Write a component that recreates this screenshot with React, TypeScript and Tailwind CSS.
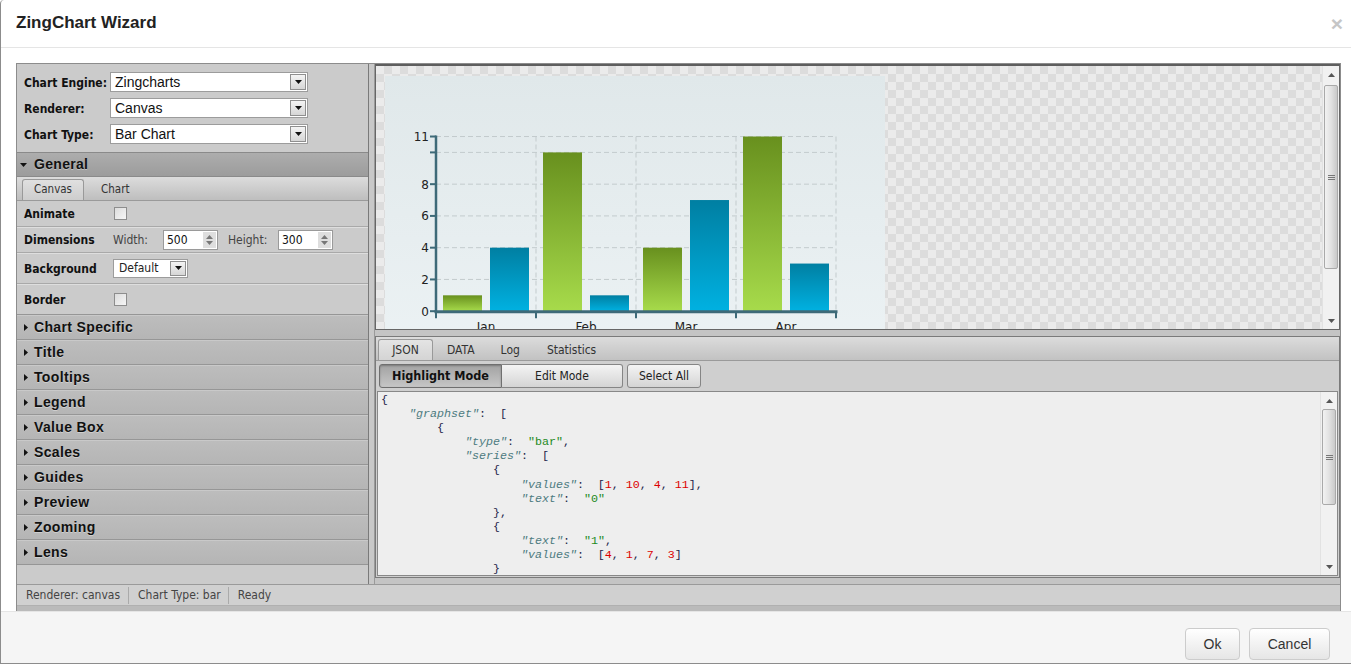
import React from "react";

const TAH = "font-['DejaVu_Sans_Condensed','DejaVu_Sans',sans-serif]";

function DownTri({ c = "#111" }: { c?: string }) {
  return (
    <svg width="7" height="4" viewBox="0 0 7 4" className="block">
      <path d="M0 0H7L3.5 4Z" fill={c} />
    </svg>
  );
}

function RightTri() {
  return (
    <svg width="4" height="7" viewBox="0 0 4 7" className="block">
      <path d="M0 0L4 3.5L0 7Z" fill="#111" />
    </svg>
  );
}

function SelectBox({ value, w }: { value: string; w: string }) {
  return (
    <div className={"h-[20px] bg-white border border-[#9c9c9c] flex items-center " + w}>
      <span className="pl-[4px] text-[14px] text-[#111] font-['Liberation_Sans',Arial,sans-serif] leading-none">{value}</span>
      <div className="ml-auto mr-[1px] w-[16px] h-[16px] border border-[#8f8f8f] bg-gradient-to-b from-[#f4f4f4] to-[#d6d6d6] flex items-center justify-center">
        <DownTri />
      </div>
    </div>
  );
}

function Checkbox() {
  return <div className="w-[13px] h-[13px] border border-[#8d8d8d] bg-gradient-to-br from-[#dcdcdc] to-[#f6f6f6]" />;
}

function Spinner({ value }: { value: string }) {
  return (
    <div className="w-[55px] h-[20px] bg-white border border-[#9a9a9a] flex items-center">
      <span className="pl-[3px] text-[12px] text-[#111]">{value}</span>
      <div className="ml-auto mr-[1px] w-[13px] h-[16px] bg-[#dedede] flex flex-col items-center justify-center gap-[2px]">
        <svg width="7" height="4" viewBox="0 0 7 4" className="block"><path d="M0 4H7L3.5 0Z" fill="#777" /></svg>
        <svg width="7" height="4" viewBox="0 0 7 4" className="block"><path d="M0 0H7L3.5 4Z" fill="#777" /></svg>
      </div>
    </div>
  );
}

function Scrollbar({ thumbTop, thumbH }: { thumbTop: number; thumbH: number }) {
  return (
    <div className="w-[17px] shrink-0 h-full bg-[#f1f1f1] border-l border-[#e2e2e2] flex flex-col items-center relative">
      <div className="h-[17px] w-full flex items-center justify-center">
        <svg width="7" height="4" viewBox="0 0 7 4" className="block"><path d="M0 4H7L3.5 0Z" fill="#555" /></svg>
      </div>
      <div
        className="absolute left-[1px] w-[14px] rounded-[2px] border border-[#a9a9a9] bg-gradient-to-r from-[#f2f2f2] via-[#e2e2e2] to-[#c9c9c9] flex flex-col items-center justify-center gap-[1px]"
        style={{ top: thumbTop, height: thumbH }}
      >
        <div className="w-[7px] h-[1px] bg-[#777]" />
        <div className="w-[7px] h-[1px] bg-[#777]" />
        <div className="w-[7px] h-[1px] bg-[#777]" />
      </div>
      <div className="mt-auto h-[17px] w-full flex items-center justify-center">
        <svg width="7" height="4" viewBox="0 0 7 4" className="block"><path d="M0 0H7L3.5 4Z" fill="#555" /></svg>
      </div>
    </div>
  );
}

function Chart() {
  const y = (v: number) => 235.2 - v * 15.88;
  const green = [1, 10, 4, 11];
  const blue = [4, 1, 7, 3];
  const months = ["Jan", "Feb", "Mar", "Apr"];
  return (
    <svg width="500" height="300" viewBox="0 0 500 300" className="block shrink-0">
      <defs>
        <linearGradient id="cbg" x1="0" y1="0" x2="0" y2="1">
          <stop offset="0" stopColor="#e0e8ea" />
          <stop offset="1" stopColor="#edf3f5" />
        </linearGradient>
        <linearGradient id="cg" x1="0" y1="0" x2="0" y2="1">
          <stop offset="0" stopColor="#68901e" />
          <stop offset="1" stopColor="#a7db4b" />
        </linearGradient>
        <linearGradient id="cb" x1="0" y1="0" x2="0" y2="1">
          <stop offset="0" stopColor="#007fa2" />
          <stop offset="1" stopColor="#00b1e1" />
        </linearGradient>
      </defs>
      <rect width="500" height="300" fill="url(#cbg)" />
      {[11, 10, 8, 6, 4, 2].map((v) => (
        <line key={"h" + v} x1="51" x2="451" y1={y(v)} y2={y(v)} stroke="#c3cbcd" strokeWidth="1" strokeDasharray="5 3" />
      ))}
      {[151, 251, 351, 451].map((x) => (
        <line key={"v" + x} x1={x} x2={x} y1={y(11)} y2={y(0)} stroke="#c3cbcd" strokeWidth="1" strokeDasharray="5 3" />
      ))}
      {green.map((v, i) => (
        <rect key={"g" + i} x={58 + i * 100} y={y(v)} width="39" height={y(0) - y(v)} fill="url(#cg)" />
      ))}
      {blue.map((v, i) => (
        <rect key={"b" + i} x={105 + i * 100} y={y(v)} width="39" height={y(0) - y(v)} fill="url(#cb)" />
      ))}
      {[11, 10, 8, 6, 4, 2, 0].map((v) => (
        <line key={"t" + v} x1="45" x2="51" y1={y(v)} y2={y(v)} stroke="#3e6a78" strokeWidth="2" />
      ))}
      <line x1="51" x2="51" y1={y(11) - 1} y2={y(0) + 1} stroke="#3e6a78" strokeWidth="2.5" />
      <line x1="49.5" x2="452.5" y1={y(0) + 0.5} y2={y(0) + 0.5} stroke="#3e6a78" strokeWidth="3" />
      {[51, 151, 251, 351, 451].map((x) => (
        <line key={"xt" + x} x1={x} x2={x} y1={y(0)} y2={y(0) + 7} stroke="#3e6a78" strokeWidth="2" />
      ))}
      {[11, 8, 6, 4, 2, 0].map((v) => (
        <text key={"l" + v} x="44" y={y(v) + 4.5} textAnchor="end" fontSize="12" fill="#222" fontFamily="DejaVu Sans, sans-serif">
          {v}
        </text>
      ))}
      {months.map((m, i) => (
        <text key={m} x={101 + i * 100} y="255" textAnchor="middle" fontSize="12" fill="#222" fontFamily="DejaVu Sans, sans-serif">
          {m}
        </text>
      ))}
    </svg>
  );
}

const P = ({ children }: { children: React.ReactNode }) => <span className="text-[#25254a]">{children}</span>;
const K = ({ children }: { children: React.ReactNode }) => <span className="text-[#4d7b80] italic">{children}</span>;
const S = ({ children }: { children: React.ReactNode }) => <span className="text-[#1d8a1d]">{children}</span>;
const N = ({ children }: { children: React.ReactNode }) => <span className="text-[#dd0000]">{children}</span>;

function Code() {
  const ind = (n: number) => "    ".repeat(n);
  const lines: React.ReactNode[] = [
    <><P>{"{"}</P></>,
    <>{ind(1)}<K>"graphset"</K><P>:  [</P></>,
    <>{ind(2)}<P>{"{"}</P></>,
    <>{ind(3)}<K>"type"</K><P>:  </P><S>"bar"</S><P>,</P></>,
    <>{ind(3)}<K>"series"</K><P>:  [</P></>,
    <>{ind(4)}<P>{"{"}</P></>,
    <>{ind(5)}<K>"values"</K><P>:  [</P><N>1</N><P>, </P><N>10</N><P>, </P><N>4</N><P>, </P><N>11</N><P>],</P></>,
    <>{ind(5)}<K>"text"</K><P>:  </P><S>"0"</S></>,
    <>{ind(4)}<P>{"},"}</P></>,
    <>{ind(4)}<P>{"{"}</P></>,
    <>{ind(5)}<K>"text"</K><P>:  </P><S>"1"</S><P>,</P></>,
    <>{ind(5)}<K>"values"</K><P>:  [</P><N>4</N><P>, </P><N>1</N><P>, </P><N>7</N><P>, </P><N>3</N><P>]</P></>,
    <>{ind(4)}<P>{"}"}</P></>,
    <>{ind(3)}<P>{"]"}</P></>,
    <>{ind(2)}<P>{"}"}</P></>,
    <>{ind(1)}<P>{"]"}</P></>,
    <><P>{"}"}</P></>,
  ];
  return (
    <div className="flex-1 overflow-hidden pl-[3px] pt-[1px] font-['Liberation_Mono','Courier_New',monospace] text-[11.67px] leading-[14.1px] whitespace-pre">
      {lines.map((l, i) => (
        <div key={i}>{l}</div>
      ))}
    </div>
  );
}

const sections = ["Chart Specific", "Title", "Tooltips", "Legend", "Value Box", "Scales", "Guides", "Preview", "Zooming", "Lens"];

function LeftPanel() {
  return (
    <div className={"w-[352px] shrink-0 h-full bg-[#cbcbcb] border-r border-[#7a7a7a] flex flex-col overflow-hidden " + TAH}>
      <div className="flex flex-col gap-[6px] pl-[7px] pt-[8px] pb-[8px]">
        {[
          ["Chart Engine:", "Zingcharts"],
          ["Renderer:", "Canvas"],
          ["Chart Type:", "Bar Chart"],
        ].map(([l, v]) => (
          <div key={l} className="flex items-center h-[20px]">
            <span className="w-[86px] pt-[2px] text-[12px] font-bold text-[#111]">{l}</span>
            <SelectBox value={v} w="w-[198px]" />
          </div>
        ))}
      </div>
      <div className="h-[25px] shrink-0 border-y border-[#8a8a8a] bg-gradient-to-b from-[#adadad] to-[#9c9c9c] flex items-center pl-[3px]">
        <DownTri />
        <span className="ml-[7px] text-[14px] font-bold text-[#111] font-['Liberation_Sans',Arial,sans-serif] tracking-[0.3px] [text-shadow:0_1px_0_rgba(255,255,255,0.35)]">General</span>
      </div>
      <div className="h-[24px] shrink-0 bg-gradient-to-b from-[#dcdcdc] to-[#bebebe] border-b border-[#9a9a9a] flex items-end pl-[5px]">
        <div className="w-[62px] h-[21px] border border-b-0 border-[#999] rounded-t-[3px] bg-gradient-to-b from-[#e0e0e0] to-[#cdcdcd] flex items-center justify-center text-[11.5px] text-[#333]">
          Canvas
        </div>
        <div className="h-[21px] flex items-center ml-[17px] text-[11.5px] text-[#333]">Chart</div>
      </div>
      <div className="h-[26px] shrink-0 flex items-center pl-[7px] border-b border-[#a9a9a9] shadow-[0_1px_0_#dedede]">
        <span className="w-[90px] pt-[1px] text-[12px] font-bold text-[#111]">Animate</span>
        <Checkbox />
      </div>
      <div className="h-[26px] shrink-0 flex items-center pl-[7px] border-b border-[#a9a9a9] shadow-[0_1px_0_#dedede]">
        <span className="w-[89px] pt-[1px] text-[12px] font-bold text-[#111]">Dimensions</span>
        <span className="w-[50px] pt-[1px] text-[12px] text-[#444]">Width:</span>
        <Spinner value="500" />
        <span className="ml-[10px] w-[50px] pt-[1px] text-[12px] text-[#444]">Height:</span>
        <Spinner value="300" />
      </div>
      <div className="h-[31px] shrink-0 flex items-center pl-[7px] border-b border-[#a9a9a9] shadow-[0_1px_0_#dedede]">
        <span className="w-[89px] pt-[2px] text-[12px] font-bold text-[#111]">Background</span>
        <div className="w-[75px] h-[19px] bg-white border border-[#9c9c9c] flex items-center">
          <span className="pl-[5px] text-[12px] text-[#222]">Default</span>
          <div className="ml-auto mr-[1px] w-[16px] h-[15px] border border-[#8f8f8f] bg-gradient-to-b from-[#f4f4f4] to-[#d6d6d6] flex items-center justify-center">
            <DownTri />
          </div>
        </div>
      </div>
      <div className="h-[30px] shrink-0 flex items-center pl-[7px]">
        <span className="w-[90px] pt-[1px] text-[12px] font-bold text-[#111]">Border</span>
        <Checkbox />
      </div>
      {sections.map((s) => (
        <div
          key={s}
          className="h-[25px] shrink-0 border-t border-[#969696] bg-gradient-to-b from-[#bdbdbd] to-[#b5b5b5] shadow-[inset_0_1px_0_#c9c9c9] flex items-center pl-[7px]"
        >
          <RightTri />
          <span className="ml-[6px] text-[14px] font-bold text-[#111] font-['Liberation_Sans',Arial,sans-serif] tracking-[0.35px] [text-shadow:0_1px_0_rgba(255,255,255,0.35)]">
            {s}
          </span>
        </div>
      ))}
      <div className="border-t border-[#969696] flex-1" />
    </div>
  );
}

function RightPanel() {
  return (
    <div className={"flex-1 h-full flex flex-col bg-[#c4c4c4] " + TAH}>
      <div className="h-[266px] shrink-0 border border-[#666] border-t-2 border-t-[#5e5e5e] flex overflow-hidden">
        <div className="flex-1 overflow-hidden pl-[9px] pt-[10px] bg-[#ebebeb] bg-[image:conic-gradient(#dcdcdc_25%,#ebebeb_0_50%,#dcdcdc_0_75%,#ebebeb_0)] bg-[length:16px_16px]">
          <Chart />
        </div>
        <Scrollbar thumbTop={19} thumbH={184} />
      </div>
      <div className="h-[6px] shrink-0" />
      <div className="h-[242px] shrink-0 border border-[#7a7a7a] flex flex-col bg-[#cfcfcf]">
        <div className="h-[24px] shrink-0 bg-gradient-to-b from-[#dcdcdc] to-[#c2c2c2] border-b border-[#9a9a9a] flex items-end pl-[2px] text-[12px] text-[#333]">
          <div className="w-[55px] h-[21px] border border-b-0 border-[#999] rounded-t-[3px] bg-gradient-to-b from-[#e4e4e4] to-[#d4d4d4] flex items-center justify-center">JSON</div>
          <div className="h-[21px] flex items-center ml-[14px]">DATA</div>
          <div className="h-[21px] flex items-center ml-[26px]">Log</div>
          <div className="h-[21px] flex items-center ml-[27px]">Statistics</div>
        </div>
        <div className="h-[30px] shrink-0 flex items-center pl-[3px]">
          <div className="w-[123px] h-[24px] rounded-l-[3px] border border-[#6f6f6f] bg-gradient-to-b from-[#a3a3a3] to-[#c6c6c6] shadow-[inset_0_1px_2px_rgba(0,0,0,0.25)] flex items-center justify-center text-[12.5px] font-bold text-[#111]">
            Highlight Mode
          </div>
          <div className="w-[121px] h-[24px] rounded-r-[3px] border border-l-0 border-[#858585] bg-gradient-to-b from-[#f4f4f4] to-[#d4d4d4] flex items-center justify-center text-[12px] text-[#222]">
            Edit Mode
          </div>
          <div className="ml-[4px] w-[74px] h-[24px] rounded-[3px] border border-[#858585] bg-gradient-to-b from-[#f4f4f4] to-[#d4d4d4] flex items-center justify-center text-[12px] text-[#222]">
            Select All
          </div>
        </div>
        <div className="flex-1 mx-[1px] mb-[1px] border border-[#888] bg-[#eeeeee] flex overflow-hidden">
          <Code />
          <Scrollbar thumbTop={17} thumbH={96} />
        </div>
      </div>
      <div className="flex-1" />
    </div>
  );
}

export default function App() {
  return (
    <div className="w-[1351px] h-[664px] bg-white border-l border-b border-[#8c8c8c] rounded-tl-[4px] flex flex-col overflow-hidden font-['Liberation_Sans',Arial,sans-serif]">
      <div className="h-[48px] shrink-0 border-b border-[#e5e5e5] flex items-center justify-between pl-[15px] pr-[8px]">
        <h4 className="text-[17px] font-bold text-[#222] leading-none -mt-[2px]">ZingChart Wizard</h4>
        <span className="text-[21px] font-bold text-[#c6c6c6] leading-none">×</span>
      </div>
      <div className="flex-1 pl-[15px] pt-[15px]">
        <div className="w-[1325px] h-[548px] border-x border-t border-[#8c8c8c] bg-[#c4c4c4] flex flex-col">
          <div className="h-[520px] shrink-0 flex">
            <LeftPanel />
            <div className="w-[6px] shrink-0 bg-[#c8c8c8] border-r border-[#9a9a9a]" />
            <RightPanel />
          </div>
          <div className={"h-[21px] shrink-0 border-t border-[#9a9a9a] bg-[#d0d0d0] flex items-center text-[12px] text-[#444] " + TAH}>
            <span className="pl-[9px] pr-[8px]">Renderer: canvas</span>
            <span className="w-px h-[17px] bg-[#aaa]" />
            <span className="pl-[9px] pr-[7px]">Chart Type: bar</span>
            <span className="w-px h-[17px] bg-[#aaa]" />
            <span className="pl-[9px]">Ready</span>
          </div>
          <div className="flex-1 bg-[#bababa] border-t border-[#b0b0b0]" />
        </div>
      </div>
      <div className="h-[52px] shrink-0 bg-[#f5f5f5] border-t border-[#e5e5e5] flex justify-end items-start pt-[16px] pr-[21px] gap-[9px]">
        <button className="w-[55px] h-[32px] rounded-[4px] border border-[#cccccc] bg-gradient-to-b from-white to-[#e6e6e6] text-[14px] text-[#333]">Ok</button>
        <button className="w-[81px] h-[32px] rounded-[4px] border border-[#cccccc] bg-gradient-to-b from-white to-[#e6e6e6] text-[14px] text-[#333]">Cancel</button>
      </div>
    </div>
  );
}
